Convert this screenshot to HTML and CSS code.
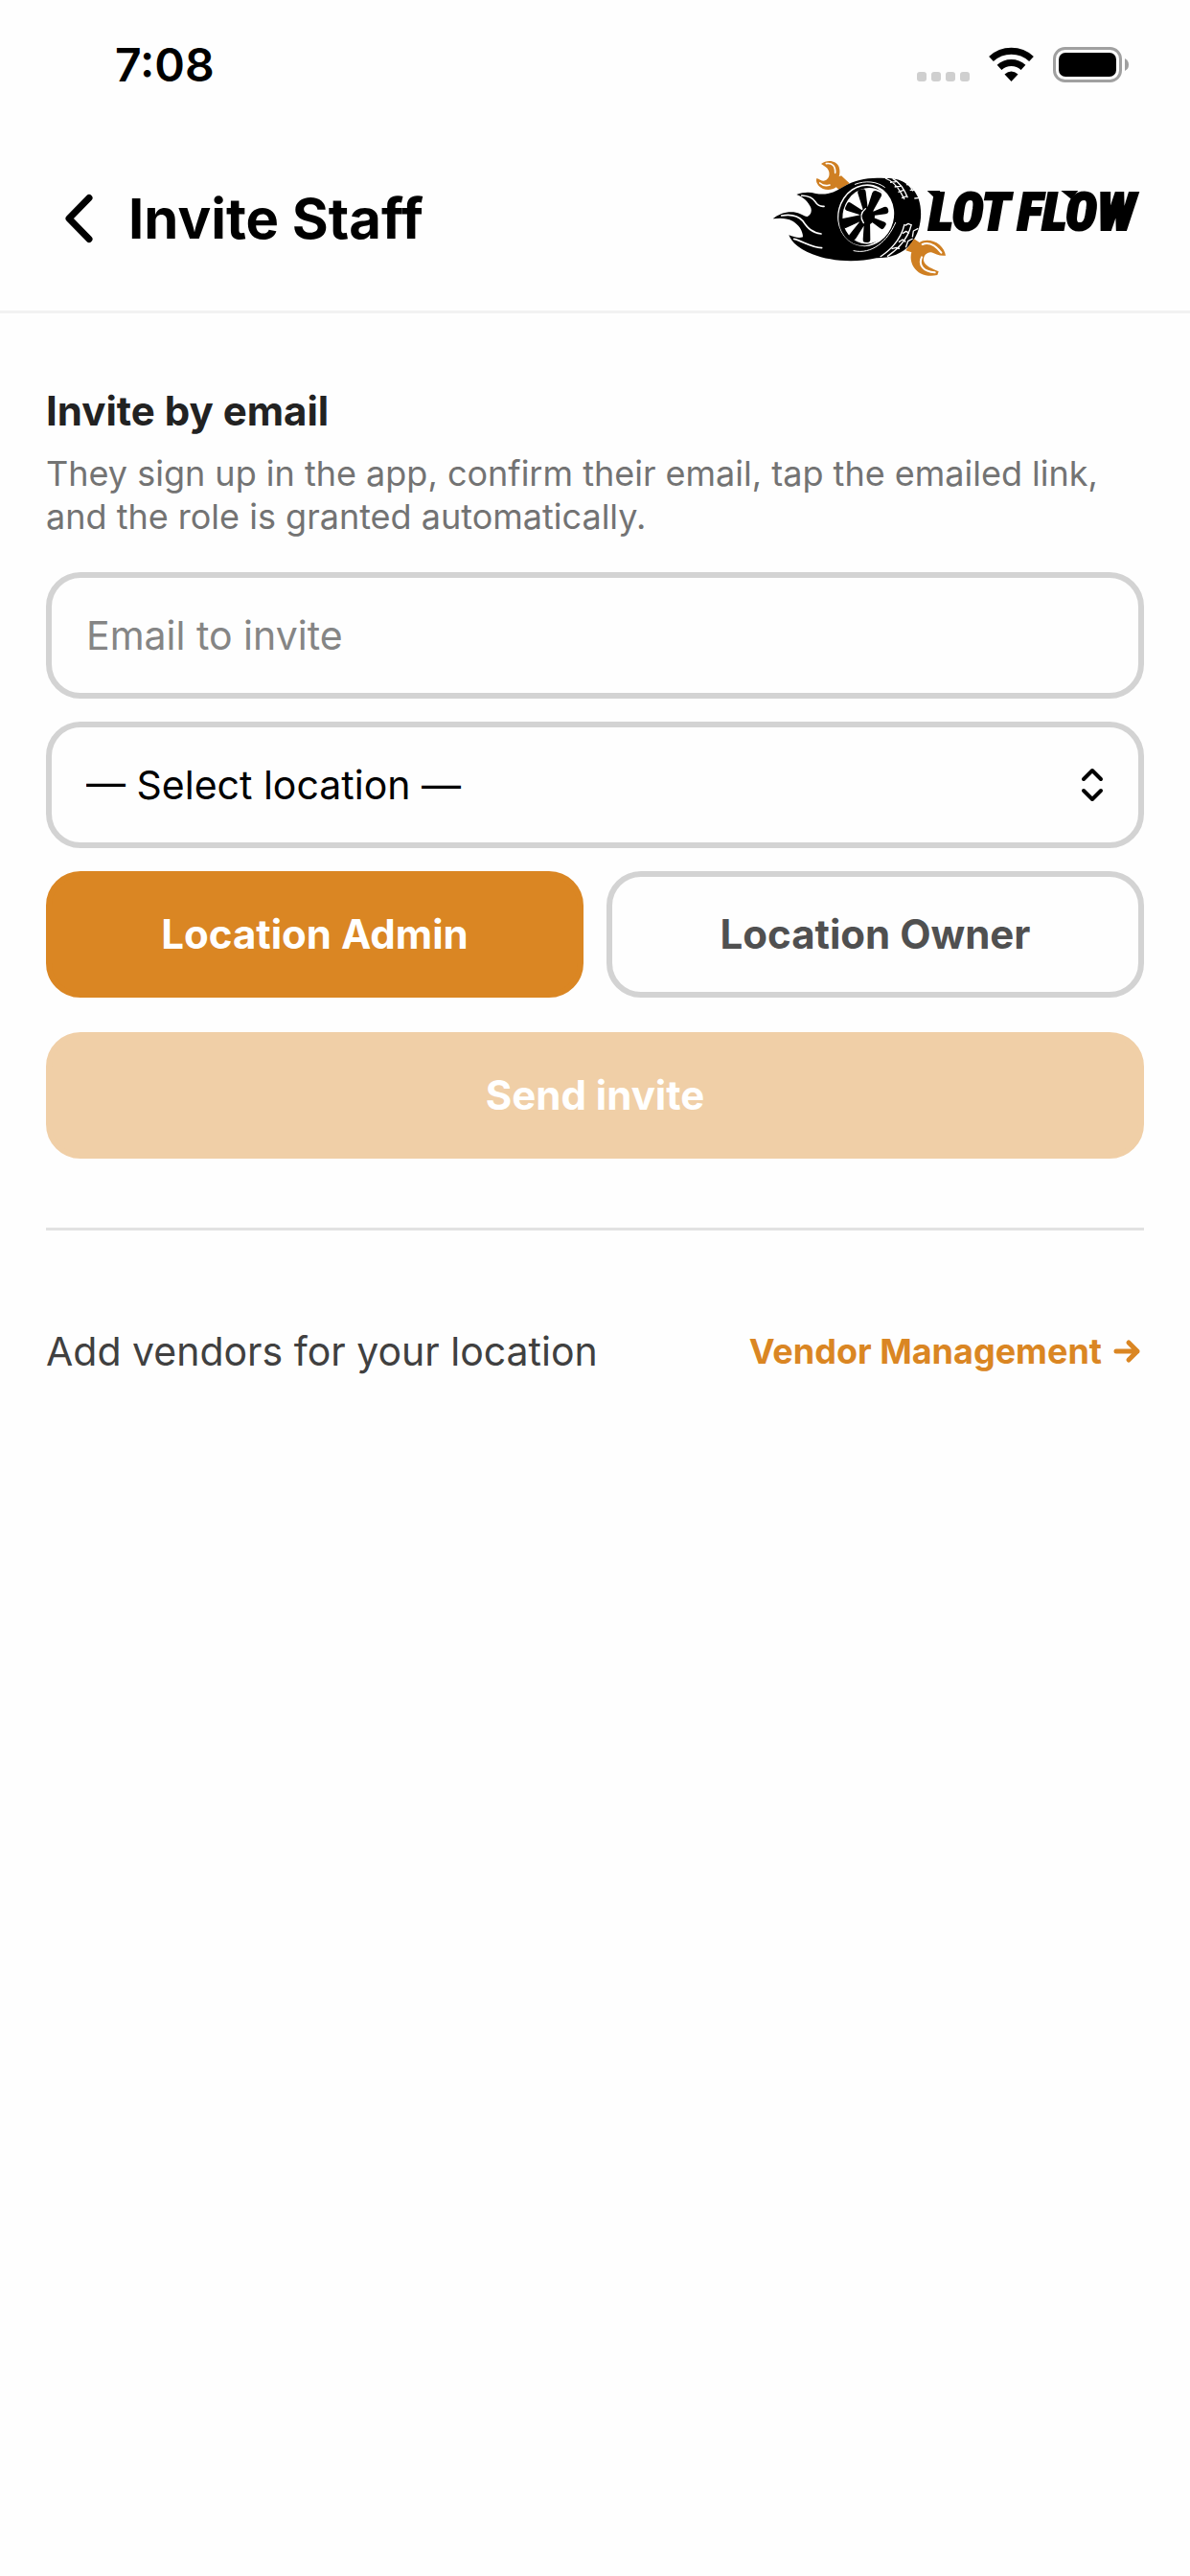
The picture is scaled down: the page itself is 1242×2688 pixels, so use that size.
FILE: index.html
```html
<!DOCTYPE html>
<html lang="en">
<head>
<meta charset="utf-8">
<meta name="viewport" content="width=device-width, initial-scale=1">
<title>Invite Staff</title>
<link rel="stylesheet" href="styles.css">
</head>
<body>
<div class="status-bar">
  <time class="clock">7:08</time>
  <svg class="status-icons" width="222" height="40" viewBox="0 0 222 40" aria-hidden="true">
    <g fill="#cfcfcf">
      <rect x="0" y="27" width="10" height="10" rx="3"/>
      <rect x="15" y="27" width="10" height="10" rx="3"/>
      <rect x="30" y="27" width="10" height="10" rx="3"/>
      <rect x="45" y="27" width="10" height="10" rx="3"/>
    </g>
    <g fill="none" stroke="#000" stroke-width="7">
      <path d="M77.500 13.500A31 31 0 0 1 119.500 13.500"/>
      <path d="M86 22.300A18.500 18.500 0 0 1 111 22.300"/>
    </g>
    <path d="M91.500 29.500Q98.500 23.500 105.500 29.500L98.500 37Z"/>
    <rect x="143.500" y="2.500" width="69" height="34" rx="11" fill="none" stroke="#a0a0a0" stroke-width="3"/>
    <rect x="148" y="7" width="60" height="25" rx="7"/>
    <path d="M217 13Q221 15 221 19.500Q221 24 217 26Z" fill="#a0a0a0"/>
  </svg>
</div>

<header class="app-header">
  <button class="back" type="button" aria-label="Back">
    <svg width="36" height="56" viewBox="0 0 36 56" aria-hidden="true"><path d="M29 6.500L8 28L29 49.500" fill="none" stroke="currentColor" stroke-width="7" stroke-linecap="round" stroke-linejoin="round"/></svg>
  </button>
  <h1 class="title">Invite Staff</h1>
  <svg class="logo" viewBox="72 108 1170 372" role="img" aria-label="Lot Flow">
    <!-- upper wrench -->
    <path fill="#cf7f22" d="M231 123C250 108 279 112 287 133C291 146 289 155 287 163L294 160L320 184L286 203L278 196C262 208 236 206 223 191C217 184 214 176 217 168C226 171 233 177 239 176C253 175 261 157 254 143C250 133 240 130 231 123Z"/>
    <path fill="none" stroke="#fff" stroke-width="5" stroke-linecap="round" d="M247 122C266 119 276 130 275 151M227 183C237 192 247 193 258 189"/>
    <!-- tyre and flames -->
    <path d="M80 295C98 280 120 272 145 274C166 276 177 289 188 288C200 282 203 269 198 258C190 241 175 227 154 219C176 211 196 211 214 216C252 222 274 211 300 195C340 171 382 164 432 168C486 166 522 194 536 232C551 278 543 332 515 370C488 404 450 418 404 418C338 433 258 428 204 406C163 389 139 370 130 346C145 351 160 357 174 352C174 331 160 313 142 302C122 292 102 292 80 295Z"/>
    <!-- rim -->
    <g transform="rotate(14 371 284)">
      <ellipse cx="371" cy="284" rx="88" ry="98" fill="#fff"/>
      <ellipse cx="368" cy="286" rx="81" ry="94"/>
      <ellipse cx="378" cy="284" rx="79" ry="88" fill="#fff"/>
    </g>
    <path d="M365 275L346 215Q344 206 352 204L363 202Q370 202 371 211L378 270ZM372 273L391 214Q395 205 404 208L416 213Q423 217 419 225L389 279ZM387 275L428 258Q439 255 441 265L442 272Q441 279 433 280L389 286ZM387 288L430 305Q437 309 433 316L427 325Q422 330 416 325L380 298ZM384 297L385 361Q384 369 376 369L367 368Q361 367 362 359L366 300ZM374 302L341 355Q337 363 329 360L321 355Q315 350 321 343L360 294ZM362 299L310 323Q300 326 296 316L293 303Q292 296 299 294L358 282ZM361 285L311 269Q304 267 307 259L313 247Q317 240 324 245L366 272Z"/>
    <ellipse cx="375" cy="287" rx="24" ry="27"/>
    <path fill="none" stroke="#fff" stroke-width="4" stroke-linecap="round" d="M370 263Q347 281 364 308"/>
    <!-- flame and sidewall highlights -->
    <g fill="none" stroke="#fff" stroke-width="5" stroke-linecap="round">
      <path d="M170 222C193 223 206 230 213 242C220 254 229 257 240 256"/>
      <path d="M107 285C142 279 161 287 174 302C190 326 202 337 231 342"/>
      <path d="M146 358C176 365 196 384 233 386"/>
      <path stroke-width="3" d="M337 187C371 174 405 178 430 196M333 395C390 408 439 365 464 307"/>
    </g>
    <!-- tread -->
    <g fill="none" stroke="#fff" stroke-width="4" stroke-linejoin="round">
      <path d="M432 168Q461 179 480 212L492 234M455 169Q485 185 502 229M447 181L466 179M461 195L480 193M472 211L490 205M483 230L500 224M481 172Q507 184 519 208M498 188L517 190M509 205L528 205M523 231L541 229"/>
      <path d="M492 312Q478 373 416 414M514 312Q500 371 438 413M494 316L504 310L514 315M486 341L497 334L507 340M474 368L486 360L496 367M452 389L466 385L477 388M535 325L520 333L517 352M518 357L503 365L496 385"/>
    </g>
    <!-- lower wrench -->
    <path fill="#cf7f22" d="M522 358L539 369C555 358 584 361 601 376C613 386 619 399 621 410C603 413 588 404 576 400C562 398 550 412 552 426C557 445 581 451 599 460L595 471C562 478 535 468 521 446C511 431 510 414 514 400L496 394Z"/>
    <path fill="none" stroke="#fff" stroke-width="6" stroke-linecap="round" stroke-linejoin="round" d="M548 375C566 368 586 374 607 401M546 415C535 440 551 461 587 463"/>
    <text class="logo-text" y="331"><tspan x="568">LOT </tspan><tspan x="846">FLOW</tspan></text>
    <path d="M563 207H604L590 233ZM982 207H1036L1014 233Z"/>
  </svg>
</header>

<main class="content">
  <form class="invite">
    <h2 class="section-title">Invite by email</h2>
    <p class="hint">They sign up in the app, confirm their email, tap the emailed link, and the role is granted automatically.</p>
    <input class="control field" type="email" placeholder="Email to invite" aria-label="Email to invite">
    <div class="select-wrap">
      <select class="control field" aria-label="Location">
        <option>— Select location —</option>
      </select>
      <svg class="select-icon" width="24" height="36" viewBox="0 0 24 36" aria-hidden="true"><path d="M3 12L12 3L21 12M3 24L12 33L21 24" fill="none" stroke="#000" stroke-width="4" stroke-linecap="round" stroke-linejoin="round"/></svg>
    </div>
    <div class="roles" role="group" aria-label="Role">
      <button class="control role role-selected" type="button" aria-pressed="true">Location Admin</button>
      <button class="control role" type="button" aria-pressed="false">Location Owner</button>
    </div>
    <button class="control send" type="submit" disabled>Send invite</button>
  </form>
  <section class="vendors">
    <p class="vendors-text">Add vendors for your location</p>
    <a class="vendors-link" href="#vendors">Vendor Management
      <svg width="32" height="26" viewBox="0 0 32 26" aria-hidden="true"><path d="M3 13H25M16 4L25 13L16 22" fill="none" stroke="currentColor" stroke-width="5" stroke-linecap="round" stroke-linejoin="round"/></svg>
    </a>
  </section>
</main>
</body>
</html>
```
FILE: styles.css
```css
* {
  box-sizing: border-box;
}

body {
  margin: 0;
  background: #fefefe;
  color: #000;
  font-family: Inter, "Liberation Sans", sans-serif;
  font-size: 41px;
  line-height: 48px;
}

h1, h2, p {
  margin: 0;
}

.status-bar {
  display: flex;
  justify-content: space-between;
  align-items: center;
  height: 132px;
  padding: 4px 63px 0 120px;
}

.clock {
  font-size: 48px;
  font-weight: 600;
}

.app-header {
  display: flex;
  align-items: center;
  height: 195px;
  padding: 0 48px;
  border-bottom: 3px solid #f2f2f2;
}

.back {
  display: flex;
  padding: 0 10px 0 16px;
  border: 0;
  background: none;
  color: inherit;
}

.title {
  flex: 1;
  padding-left: 24px;
  font-size: 58px;
  line-height: 72px;
  font-weight: 700;
}

.logo {
  width: 390px;
  height: 124px;
}

.logo-text {
  font-family: "Liberation Sans Narrow", "Roboto Condensed", "Liberation Sans", sans-serif;
  font-size: 168px;
  font-weight: 900;
  font-style: italic;
  stroke: #000;
  stroke-width: 6px;
}

.content {
  padding: 78px 48px;
}

.invite {
  display: flex;
  flex-direction: column;
  gap: 24px;
  padding-bottom: 72px;
  border-bottom: 3px solid #e2e2e2;
}

.section-title {
  color: #222;
  font-size: 42px;
  font-weight: 700;
}

.hint {
  margin-top: -5px;
  padding-bottom: 11px;
  color: #737373;
  font-size: 36px;
  line-height: 45px;
}

.control {
  width: 100%;
  height: 132px;
  border: 6px solid #d3d3d3;
  border-radius: 36px;
  background: #fefefe;
  font: inherit;
}

.field {
  padding: 0 36px;
  color: #000;
}

.field::placeholder {
  color: #858585;
  opacity: 1;
}

.select-wrap {
  position: relative;
}

.select-wrap .field {
  display: block;
  appearance: none;
}

.select-icon {
  position: absolute;
  top: 48px;
  right: 42px;
  pointer-events: none;
}

.roles {
  display: grid;
  grid-template-columns: 1fr 1fr;
  gap: 24px;
}

.role,
.send {
  font-size: 42px;
  font-weight: 700;
}

.role {
  color: #505050;
}

.role-selected {
  border-color: #da8623;
  background: #da8623;
  color: #fff;
}

.send {
  margin-top: 12px;
  border-color: #f0cfa7;
  background: #f0cfa7;
  color: #fff;
}

.vendors {
  display: flex;
  justify-content: space-between;
  align-items: center;
  padding-top: 102px;
}

.vendors-text {
  color: #404040;
}

.vendors-link {
  display: flex;
  align-items: center;
  gap: 12px;
  color: #da8623;
  font-size: 36px;
  font-weight: 700;
  text-decoration: none;
}
```
